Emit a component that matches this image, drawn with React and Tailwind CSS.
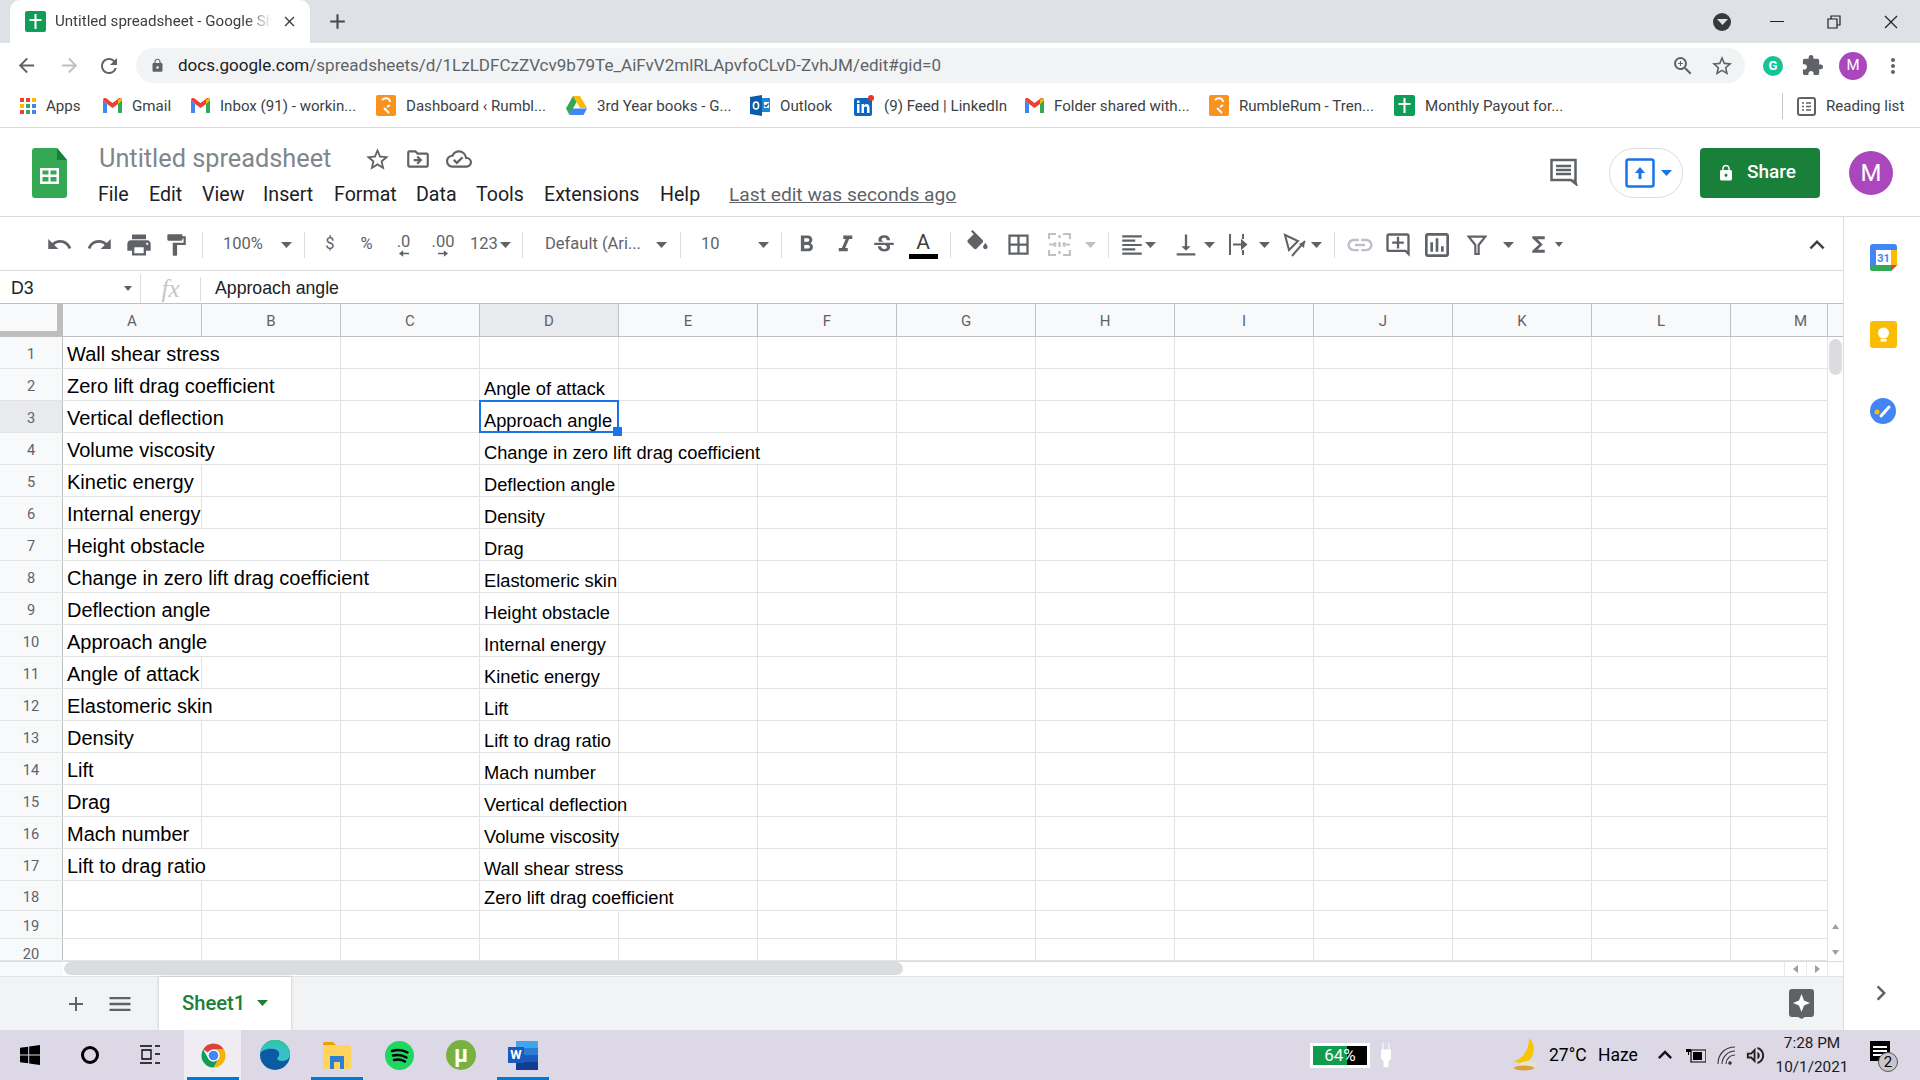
import {
  MdArrowBack, MdArrowForward, MdRefresh, MdLock, MdZoomIn, MdStarBorder, MdExtension, MdMoreVert, MdClose, MdAdd,
  MdUndo, MdRedo, MdPrint, MdFormatPaint, MdFormatBold, MdFormatItalic, MdStrikethroughS, MdBorderAll,
  MdFormatAlignLeft, MdVerticalAlignBottom, MdLink, MdOutlineAddComment, MdOutlineInsertChart, MdFunctions, MdExpandLess, MdMenu,
  MdOutlineDriveFileMove, MdOutlineCloudDone, MdChevronRight, MdKeyboardArrowUp, MdOutlineVolumeUp,
} from 'react-icons/md';

const sans = 'font-["Roboto",sans-serif]';
const arial = 'font-["Liberation_Sans",Arial,sans-serif]';

const COLS = ['A', 'B', 'C', 'D', 'E', 'F', 'G', 'H', 'I', 'J', 'K', 'L', 'M'];

// a / d = text in columns A and D, aSpan / dSpan = how many cell borders the text runs over
const ROWS = [
  { a: 'Wall shear stress', aSpan: 1 },
  { a: 'Zero lift drag coefficient', aSpan: 1, d: 'Angle of attack' },
  { a: 'Vertical deflection', aSpan: 1, d: 'Approach angle' },
  { a: 'Volume viscosity', aSpan: 1, d: 'Change in zero lift drag coefficient', dSpan: 2 },
  { a: 'Kinetic energy', d: 'Deflection angle' },
  { a: 'Internal energy', d: 'Density' },
  { a: 'Height obstacle', aSpan: 1, d: 'Drag' },
  { a: 'Change in zero lift drag coefficient', aSpan: 2, d: 'Elastomeric skin' },
  { a: 'Deflection angle', aSpan: 1, d: 'Height obstacle' },
  { a: 'Approach angle', aSpan: 1, d: 'Internal energy' },
  { a: 'Angle of attack', d: 'Kinetic energy' },
  { a: 'Elastomeric skin', aSpan: 1, d: 'Lift' },
  { a: 'Density', d: 'Lift to drag ratio' },
  { a: 'Lift', d: 'Mach number' },
  { a: 'Drag', d: 'Vertical deflection' },
  { a: 'Mach number', d: 'Volume viscosity' },
  { a: 'Lift to drag ratio', aSpan: 1, d: 'Wall shear stress' },
  { d: 'Zero lift drag coefficient', dSpan: 1 },
  {},
  {},
];

function Caret({ color = '#5f6368' }) {
  return (
    <svg width="11" height="6" viewBox="0 0 11 6" className="shrink-0">
      <path d="M0 0h11L5.5 6z" fill={color} />
    </svg>
  );
}

function SheetsFavicon({ size = 21 }) {
  return (
    <svg width={size} height={size} viewBox="0 0 21 21" className="shrink-0">
      <rect width="21" height="21" rx="2" fill="#0f9d58" />
      <path d="M9.5 3h2v5h5v2h-5v8h-2v-8h-5V8h5z" fill="#fff" />
    </svg>
  );
}

function GmailIcon() {
  return (
    <svg width="19" height="15" viewBox="0 0 19 15" className="shrink-0">
      <path d="M0 2v13h4V6z" fill="#4285f4" />
      <path d="M19 2v13h-4V6z" fill="#34a853" />
      <path d="M0 2c0-2 2-2.500 3.500-1.500L9.500 5l6-4.500C17-.5 19 0 19 2l-4 4-5.500 4L4 6z" fill="#ea4335" />
      <path d="M15 6l4-4c0-1-.5-1.500-1-2l-3 2z" fill="#fbbc04" />
    </svg>
  );
}

function RumbleIcon() {
  return (
    <svg width="20" height="21" viewBox="0 0 20 21" className="shrink-0">
      <rect width="20" height="21" rx="2" fill="#f7931e" />
      <path d="M6 5c3-3 8-2 8 2M14 10l-3 2M8 13l5 5" stroke="#fff" strokeWidth="2" fill="none" />
    </svg>
  );
}

function DriveIcon() {
  return (
    <svg width="21" height="19" viewBox="0 0 21 19" className="shrink-0">
      <path d="M7 0h7l7 12h-7z" fill="#fbbc04" />
      <path d="M7 0l3.500 6L3.500 19 0 12.500z" fill="#34a853" />
      <path d="M6.500 12.500H21L17.500 19h-14z" fill="#4285f4" />
    </svg>
  );
}

function OutlookIcon() {
  return (
    <svg width="20" height="21" viewBox="0 0 20 21" className="shrink-0">
      <path d="M8 3h12v14H8z" fill="#1e88d8" />
      <path d="M0 2l12-2v21L0 19z" fill="#0a5ca8" />
      <ellipse cx="6" cy="10.500" rx="2.600" ry="3.500" fill="none" stroke="#fff" strokeWidth="1.600" />
      <path d="M14 7h5v6h-5z" fill="#fff" />
      <path d="M14.500 10l1.500 1.500 2.500-3" stroke="#0a5ca8" strokeWidth="1.200" fill="none" />
    </svg>
  );
}

function LinkedinIcon() {
  return (
    <svg width="20" height="21" viewBox="0 0 20 21" className="shrink-0">
      <rect y="3" width="18" height="18" rx="2" fill="#0a66c2" />
      <circle cx="17" cy="3" r="3" fill="#e0392b" />
      <path d="M3 9h2.500v9H3zM3 5.500h2.500V8H3zM7.500 9H10v1.500c1.500-2.500 5.500-2 5.500 2V18H13v-5c0-2-3-2-3 0v5H7.500z" fill="#fff" />
    </svg>
  );
}

function AppsIcon() {
  const colors = ['#ea4335', '#ea4335', '#fbbc04', '#fbbc04', '#34a853', '#4285f4', '#ea4335', '#34a853', '#4285f4'];
  return (
    <div className="grid grid-cols-3 gap-[2px] w-[16px] h-[16px] shrink-0">
      {colors.map((c, i) => (
        <svg key={i} viewBox="0 0 4 4"><rect width="4" height="4" fill={c} /></svg>
      ))}
    </div>
  );
}

function Bookmark({ w, icon, label }) {
  return (
    <div className={`${w} flex items-center gap-[10px] shrink-0`}>
      {icon}
      <span className="text-[15.1px] text-[#3c4043] whitespace-nowrap">{label}</span>
    </div>
  );
}

function BrowserChrome() {
  return (
    <div className={`${sans} shrink-0`}>
      <div className="h-[43px] bg-[#dee1e6] flex items-end pl-[10px]">
        <div className="w-[300px] h-[43px] bg-white rounded-t-[10px] flex items-center pl-[15px]">
          <SheetsFavicon />
          <span className="ml-[9px] w-[217px] overflow-hidden whitespace-nowrap text-[15.1px] text-[#3c4043] [mask-image:linear-gradient(to_right,black_88%,transparent)]">Untitled spreadsheet - Google Sheets</span>
          <MdClose size={17} className="ml-[9px] text-[#3c4043]" />
        </div>
        <div className="h-[43px] flex items-center ml-[15px]">
          <MdAdd size={25} className="text-[#45494e]" />
        </div>
        <div className="ml-auto h-[43px] flex items-center">
          <div className="w-[18px] h-[18px] rounded-full bg-[#35393c] flex items-center justify-center">
            <Caret color="#dee1e6" />
          </div>
          <div className="ml-[39px] w-[14px] h-[1.5px] bg-[#202124]" />
          <svg width="14" height="14" viewBox="0 0 14 14" className="ml-[43px]">
            <path d="M1 4h9v9H1zM4 4V1h9v9h-3" fill="none" stroke="#202124" strokeWidth="1.200" />
          </svg>
          <svg width="14" height="14" viewBox="0 0 14 14" className="ml-[43px] mr-[22px]">
            <path d="M1 1l12 12M13 1L1 13" stroke="#202124" strokeWidth="1.200" />
          </svg>
        </div>
      </div>
      <div className="h-[40px] bg-white flex items-center pt-[5px]">
        <MdArrowBack size={23} className="ml-[15px] text-[#5f6368]" />
        <MdArrowForward size={23} className="ml-[20px] text-[#bdc1c6]" />
        <MdRefresh size={24} className="ml-[16px] text-[#5f6368]" />
        <div className="ml-[15px] w-[1609px] h-[35px] bg-[#f1f3f4] rounded-full flex items-center pl-[14px]">
          <MdLock size={15} className="text-[#5f6368]" />
          <span className="ml-[13px] text-[17.05px] text-[#5f6368] whitespace-nowrap">
            <span className="text-[#202124]">docs.google.com</span>/spreadsheets/d/1LzLDFCzZVcv9b79Te_AiFvV2mlRLApvfoCLvD-ZvhJM/edit#gid=0
          </span>
          <MdZoomIn size={24} className="ml-auto text-[#5f6368]" />
          <MdStarBorder size={24} className="ml-[15px] mr-[11px] text-[#5f6368]" />
        </div>
        <div className="ml-[18px] w-[20px] h-[20px] rounded-full bg-[#15c39a] text-white text-[13px] font-bold flex items-center justify-center">G</div>
        <MdExtension size={23} className="ml-[18px] text-[#5f6368]" />
        <div className="ml-[15px] w-[28px] h-[28px] rounded-full bg-[#ab47bc] text-white text-[15px] flex items-center justify-center">M</div>
        <MdMoreVert size={24} className="ml-[14px] text-[#5f6368]" />
      </div>
      <div className="h-[45px] bg-white border-b border-[#dadce0] flex items-center pl-[20px] pt-[2px]">
        <Bookmark w="w-[83px]" icon={<AppsIcon />} label="Apps" />
        <Bookmark w="w-[88px]" icon={<GmailIcon />} label="Gmail" />
        <Bookmark w="w-[185px]" icon={<GmailIcon />} label="Inbox (91) - workin..." />
        <Bookmark w="w-[190px]" icon={<RumbleIcon />} label="Dashboard ‹ Rumbl..." />
        <Bookmark w="w-[184px]" icon={<DriveIcon />} label="3rd Year books - G..." />
        <Bookmark w="w-[104px]" icon={<OutlookIcon />} label="Outlook" />
        <Bookmark w="w-[171px]" icon={<LinkedinIcon />} label="(9) Feed | LinkedIn" />
        <Bookmark w="w-[184px]" icon={<GmailIcon />} label="Folder shared with..." />
        <Bookmark w="w-[185px]" icon={<RumbleIcon />} label="RumbleRum - Tren..." />
        <Bookmark w="w-[200px]" icon={<SheetsFavicon />} label="Monthly Payout for..." />
        <div className="ml-[188px] h-[26px] border-l border-[#c4c7ca] pl-[14px] flex items-center gap-[10px]">
          <svg width="19" height="19" viewBox="0 0 19 19" className="shrink-0">
            <rect x="1" y="1" width="17" height="17" rx="2" fill="none" stroke="#5f6368" strokeWidth="2" />
            <path d="M5 6h2M9 6h5M5 9.500h2M9 9.500h5M5 13h2M9 13h5" stroke="#5f6368" strokeWidth="1.500" />
          </svg>
          <span className="text-[15.1px] text-[#3c4043] whitespace-nowrap">Reading list</span>
        </div>
      </div>
    </div>
  );
}

function SheetsLogo() {
  return (
    <svg width="35" height="50" viewBox="0 0 35 50" className="shrink-0">
      <path d="M3 0h22l10 12v35a3 3 0 0 1-3 3H3a3 3 0 0 1-3-3V3a3 3 0 0 1 3-3z" fill="#34a853" />
      <path d="M25 0l10 12H25z" fill="#188038" />
      <path d="M8 20h19v16H8z" fill="#fff" />
      <path d="M10.500 22.500h6v4h-6zM18.500 22.500h6v4h-6zM10.500 29h6v4.500h-6zM18.500 29h6v4.500h-6z" fill="#34a853" />
    </svg>
  );
}

function Menu({ w, label }) {
  return <div className={`${w} shrink-0 whitespace-nowrap`}>{label}</div>;
}

function SheetsHeader() {
  return (
    <div className={`${sans} h-[89px] bg-white border-b border-[#dadce0] flex items-start pl-[32px] pt-[20px] shrink-0`}>
      <SheetsLogo />
      <div className="ml-[32px] -mt-[10px]">
        <div className="flex items-center h-[42px]">
          <span className="w-[265px] text-[25.3px] text-[#80868b] whitespace-nowrap">Untitled spreadsheet</span>
          <MdStarBorder size={27} className="text-[#5f6368]" />
          <MdOutlineDriveFileMove size={26} className="ml-[14px] text-[#5f6368]" />
          <MdOutlineCloudDone size={26} className="ml-[15px] text-[#5f6368]" />
        </div>
        <div className="flex items-center h-[32px] -mt-[1px] -ml-[1px] text-[19.6px] text-[#202124]">
          <Menu w="w-[51px]" label="File" />
          <Menu w="w-[53px]" label="Edit" />
          <Menu w="w-[61px]" label="View" />
          <Menu w="w-[71px]" label="Insert" />
          <Menu w="w-[82px]" label="Format" />
          <Menu w="w-[60px]" label="Data" />
          <Menu w="w-[68px]" label="Tools" />
          <Menu w="w-[116px]" label="Extensions" />
          <Menu w="w-[69px]" label="Help" />
          <span className="text-[19.2px] text-[#5f6368] underline whitespace-nowrap">Last edit was seconds ago</span>
        </div>
      </div>
      <div className="ml-auto flex items-center h-[50px]">
        <svg width="29" height="29" viewBox="0 0 29 29" className="-mt-[4px]">
          <path d="M2.500 3h24v20h-.500l1 4-5-4h-19.500z" fill="none" stroke="#5f6368" strokeWidth="2.500" />
          <path d="M7 9h15M7 13h15M7 17h15" stroke="#5f6368" strokeWidth="2.500" />
        </svg>
        <div className="ml-[31px] w-[74px] h-[50px] rounded-full border border-[#dadce0] flex items-center pl-[15px] gap-[6px]">
          <svg width="30" height="30" viewBox="0 0 30 30">
            <rect x="1.500" y="1.500" width="27" height="27" rx="2" fill="none" stroke="#1a73e8" strokeWidth="2.500" />
            <path d="M15 9l-5 6h3.500v6h3v-6H20z" fill="#1a73e8" />
          </svg>
          <Caret color="#1a73e8" />
        </div>
        <div className="ml-[17px] w-[120px] h-[50px] rounded-[4px] bg-[#188038] text-white flex items-center pl-[17px] gap-[12px] pb-[1px]">
          <MdLock size={18} />
          <span className="text-[19px] font-medium">Share</span>
        </div>
        <div className="ml-[29px] mr-[27px] w-[44px] h-[44px] rounded-full bg-[#ab47bc] text-white text-[24px] flex items-center justify-center">M</div>
      </div>
    </div>
  );
}

function Slot({ w, children, className = 'justify-center' }) {
  return <div className={`${w} ${className} shrink-0 flex items-center h-full`}>{children}</div>;
}

function Divider({ w }) {
  return (
    <div className={`${w} shrink-0 flex justify-center items-center h-full`}>
      <div className="w-px h-[26px] bg-[#dadce0]" />
    </div>
  );
}

function DecimalIcon({ label, dir }) {
  return (
    <div className="flex flex-col items-center leading-none">
      <span className="text-[16.5px] leading-[17px]">{label}</span>
      <svg width="10" height="7" viewBox="0 0 12 8">
        <path d={dir === 'left' ? 'M12 3H5V0L0 4l5 4V5h7z' : 'M0 3h7V0l5 4-5 4V5H0z'} fill="#5f6368" />
      </svg>
    </div>
  );
}

function Toolbar() {
  return (
    <div className={`${sans} h-[54px] bg-white border-b border-[#dadce0] flex items-center pl-[40px] pt-[2px] text-[#5f6368] text-[16.5px] shrink-0`}>
      <Slot w="w-[39px]"><MdUndo size={27} /></Slot>
      <Slot w="w-[41px]"><MdRedo size={27} /></Slot>
      <Slot w="w-[37px]"><MdPrint size={28} /></Slot>
      <Slot w="w-[38px]"><MdFormatPaint size={26} /></Slot>
      <Divider w="w-[14px]" />
      <Slot w="w-[87px]" className="pl-[14px]"><span className="w-[58px]">100%</span><Caret /></Slot>
      <Divider w="w-[16px]" />
      <Slot w="w-[36px]">$</Slot>
      <Slot w="w-[37px]">%</Slot>
      <Slot w="w-[37px]"><DecimalIcon label=".0" dir="left" /></Slot>
      <Slot w="w-[42px]"><DecimalIcon label=".00" dir="right" /></Slot>
      <Slot w="w-[52px]" className="pl-[6px]"><span className="w-[30px]">123</span><Caret /></Slot>
      <Divider w="w-[12px]" />
      <Slot w="w-[146px]" className="pl-[17px]"><span className="w-[111px] whitespace-nowrap">Default (Ari...</span><Caret /></Slot>
      <Divider w="w-[12px]" />
      <Slot w="w-[89px]" className="pl-[15px]"><span className="w-[57px]">10</span><Caret /></Slot>
      <Divider w="w-[12px]" />
      <Slot w="w-[38px]"><MdFormatBold size={27} /></Slot>
      <Slot w="w-[40px]"><MdFormatItalic size={27} /></Slot>
      <Slot w="w-[38px]"><MdStrikethroughS size={26} /></Slot>
      <Slot w="w-[40px]">
        <div className="flex flex-col items-center">
          <span className="text-[21px] leading-[24px] text-[#3c4043]">A</span>
          <div className="w-[29px] h-[5px] bg-black" />
        </div>
      </Slot>
      <Divider w="w-[14px]" />
      <Slot w="w-[40px]">
        <svg width="27" height="27" viewBox="0 0 24 24" className="-mt-[3px]">
          <path d="M16.560 8.940L7.620 0 6.210 1.410l2.380 2.380-5.150 5.150c-.59.59-.59 1.540 0 2.120l5.500 5.500c.29.29.68.44 1.060.44s.77-.15 1.060-.44l5.500-5.500c.59-.58.59-1.530 0-2.120zM19 11.500s-2 2.170-2 3.500c0 1.100.9 2 2 2s2-.9 2-2c0-1.330-2-3.500-2-3.500z" fill="#5f6368" />
        </svg>
      </Slot>
      <Slot w="w-[42px]"><MdBorderAll size={27} /></Slot>
      <Slot w="w-[40px]">
        <svg width="23" height="23" viewBox="0 0 23 23" fill="none" stroke="#bdc1c6" strokeWidth="2.200">
          <path d="M1 6V1h7M15 1h7v5M22 17v5h-7M8 22H1v-5M1 11.500h5M22 11.500h-5M11.500 2v3M11.500 9v5M11.500 18v3" />
          <path d="M8 11.500l-2-2M8 11.500l-2 2M15 11.500l2-2M15 11.500l2 2" />
        </svg>
      </Slot>
      <Slot w="w-[22px]"><Caret color="#bdc1c6" /></Slot>
      <Divider w="w-[14px]" />
      <Slot w="w-[52px]" className="pl-[4px]"><MdFormatAlignLeft size={26} /><Caret /></Slot>
      <Slot w="w-[54px]" className="pl-[5px]"><MdVerticalAlignBottom size={28} className="mr-[4px]" /><Caret /></Slot>
      <Slot w="w-[54px]" className="pl-[6px]">
        <svg width="25" height="25" viewBox="0 0 25 25" className="mr-[7px]" fill="none" stroke="#5f6368" strokeWidth="2">
          <path d="M3 2v21M16 2v5M16 11v3M16 18v5M6 12.500h12" />
          <path d="M15 9l4 3.500-4 3.500z" fill="#5f6368" />
        </svg>
        <Caret />
      </Slot>
      <Slot w="w-[52px]" className="pl-[7px]">
        <svg width="26" height="26" viewBox="0 0 26 26" className="mr-[3px]" fill="none" stroke="#5f6368" strokeWidth="2">
          <path d="M3 3l13 6L7 18zM10 24L23 9" />
          <path d="M23 9l-1 7-5-4z" fill="#5f6368" stroke="none" />
        </svg>
        <Caret />
      </Slot>
      <Divider w="w-[14px]" />
      <Slot w="w-[38px]"><MdLink size={30} className="text-[#bdc1c6]" /></Slot>
      <Slot w="w-[38px]"><MdOutlineAddComment size={28} /></Slot>
      <Slot w="w-[40px]"><MdOutlineInsertChart size={32} /></Slot>
      <Slot w="w-[46px]" className="pl-[10px]">
        <svg width="20" height="20" viewBox="0 0 24 24" fill="none" stroke="#5f6368" strokeWidth="2.600">
          <path d="M2 2h20l-8 10v11h-4V12z" />
        </svg>
      </Slot>
      <Slot w="w-[18px]" className="justify-start"><Caret /></Slot>
      <Slot w="w-[42px]" className="justify-start pl-[5px]"><MdFunctions size={25} /></Slot>
      <Slot w="w-[20px]" className="justify-start -ml-[8px]"><svg width="8" height="5" viewBox="0 0 8 5"><path d="M0 0h8L4 5z" fill="#5f6368" /></svg></Slot>
      <Slot w="w-[258px]" className="justify-end"><MdExpandLess size={30} className="text-[#3c4043] mr-[1px]" /></Slot>
    </div>
  );
}

function FormulaBar() {
  return (
    <div className={`${arial} h-[33px] bg-white border-b border-[#c0c0c0] flex items-center pt-[3px] text-[17.7px] text-[#202124] shrink-0`}>
      <div className="w-[141px] h-full border-r border-[#dadce0] flex items-center pl-[11px] pr-[8px]">
        <span className="flex-1">D3</span>
        <svg width="8" height="5" viewBox="0 0 8 5"><path d="M0 0h8L4 5z" fill="#5f6368" /></svg>
      </div>
      <div className="w-[60px] h-[24px] border-r border-[#dadce0] flex items-center justify-center font-['Liberation_Serif',serif] italic text-[25px] text-[#c4c7c5]">fx</div>
      <span className="ml-[14px]">Approach angle</span>
    </div>
  );
}

function ColumnHeader() {
  return (
    <div className={`${sans} h-[33px] flex border-b border-[#c0c0c0] bg-[#f8f9fa] text-[#5f6368] text-[15px]`}>
      <div className="w-[63px] h-full shrink-0 border-r-[6px] border-b-[5px] border-[#bdbdbd]" />
      {COLS.map((c) => (
        <div
          key={c}
          className={`${c === 'M' ? 'w-[97px] justify-start pl-[63px]' : 'w-[139px] justify-center'} ${c === 'D' ? 'bg-[#e8eaed]' : ''} shrink-0 border-r border-[#c0c0c0] flex items-center pt-[3px]`}
        >
          {c}
        </div>
      ))}
    </div>
  );
}

function rowHeight(n) {
  if (n === 18) return 'h-[30px]';
  if (n === 19) return 'h-[28px]';
  if (n === 20) return 'h-[22px]';
  return 'h-[32px]';
}

function GridRow({ n, row }) {
  return (
    <div className={`${rowHeight(n)} flex border-b border-[#e2e3e3]`}>
      <div className={`${sans} ${n === 3 ? 'bg-[#e8eaed]' : 'bg-[#f8f9fa]'} ${n === 20 ? 'pt-[10px]' : 'pt-[4px]'} w-[63px] shrink-0 border-r border-[#c0c0c0] flex items-center justify-center text-[14.6px] text-[#5f6368]`}>
        {n}
      </div>
      {COLS.map((c, i) => {
        const hidden = (i === 0 && row.aSpan >= 1) || (i === 1 && row.aSpan >= 2) || (i === 3 && row.dSpan >= 1) || (i === 4 && row.dSpan >= 2);
        return (
          <div
            key={c}
            className={`${c === 'M' ? 'w-[97px]' : 'w-[139px]'} ${hidden ? 'border-transparent' : 'border-[#e2e3e3]'} shrink-0 border-r relative flex`}
          >
            {c === 'A' && row.a && (
              <span className="self-center pl-[4px] pt-[2px] whitespace-nowrap text-[20px] text-black">{row.a}</span>
            )}
            {c === 'D' && row.d && (
              <span className={`${n === 18 ? '-mb-[1px]' : '-mb-[2px]'} self-end pl-[4px] whitespace-nowrap text-[18.3px] text-black`}>{row.d}</span>
            )}
            {c === 'D' && n === 3 && (
              <div className="absolute -inset-[1px] border-2 border-[#1a73e8]">
                <div className="absolute -right-[5px] -bottom-[5px] w-[9px] h-[9px] bg-[#1a73e8]" />
              </div>
            )}
          </div>
        );
      })}
    </div>
  );
}

function Grid() {
  return (
    <div className={`${arial} flex-1 flex min-h-0`}>
      <div className="w-[1828px] shrink-0 overflow-hidden">
        <ColumnHeader />
        {ROWS.map((row, i) => (
          <GridRow key={i} n={i + 1} row={row} />
        ))}
      </div>
      <div className="w-[15px] shrink-0 flex flex-col">
        <div className="h-[33px] bg-[#f8f9fa] border-b border-[#c0c0c0] shrink-0" />
        <div className="w-[13px] h-[36px] mx-auto mt-[2px] rounded-full bg-[#dadce0]" />
        <div className="flex-1 flex flex-col justify-end items-center pb-[6px] gap-[21px]">
          <svg width="7" height="5" viewBox="0 0 7 5"><path d="M0 5h7L3.500 0z" fill="#9aa0a6" /></svg>
          <svg width="7" height="5" viewBox="0 0 7 5"><path d="M0 0h7L3.500 5z" fill="#9aa0a6" /></svg>
        </div>
      </div>
    </div>
  );
}

function HorizontalScroll() {
  return (
    <div className="h-[15px] shrink-0 flex border-t border-[#dadce0] bg-white">
      <div className="w-[63px] bg-[#f8f9fa]" />
      <div className="w-[839px] h-[13px] ml-[1px] rounded-full bg-[#dadce0]" />
      <div className="ml-auto flex items-center">
        <div className="w-[22px] h-full flex items-center justify-center border-l border-[#e8eaed]">
          <svg width="5" height="8" viewBox="0 0 5 8"><path d="M5 0v8L0 4z" fill="#9aa0a6" /></svg>
        </div>
        <div className="w-[22px] h-full flex items-center justify-center border-x border-[#e8eaed]">
          <svg width="5" height="8" viewBox="0 0 5 8"><path d="M0 0v8l5-4z" fill="#9aa0a6" /></svg>
        </div>
        <div className="w-[15px] h-full" />
      </div>
    </div>
  );
}

function SheetTabs() {
  return (
    <div className={`${sans} h-[54px] shrink-0 bg-[#f1f3f4] border-t border-[#e2e3e3] flex items-center`}>
      <MdAdd size={24} className="ml-[64px] text-[#5f6368]" />
      <MdMenu size={28} className="ml-[18px] text-[#5f6368]" />
      <div className="ml-[25px] w-[132px] h-full bg-white shadow-[0_0_3px_rgba(60,64,67,0.3)] flex items-center pl-[23px] gap-[12px] pb-[1px]">
        <span className="text-[20.2px] font-medium text-[#188038]">Sheet1</span>
        <Caret color="#188038" />
      </div>
      <svg width="25" height="30" viewBox="0 0 25 30" className="ml-auto mr-[29px]">
        <path d="M3 0h19a3 3 0 0 1 3 3v22a3 3 0 0 1-3 3h-6l-3.500 2-3.500-2H3a3 3 0 0 1-3-3V3a3 3 0 0 1 3-3z" fill="#5f6368" />
        <path d="M12.500 5l2.500 6.500L21 14l-6 2.500L12.500 23 10 16.500 4 14l6-2.500z" fill="#fff" />
      </svg>
    </div>
  );
}

function SidePanel() {
  return (
    <div className="w-[77px] shrink-0 border-l border-[#dadce0] bg-white flex flex-col items-center pt-[27px]">
      <svg width="27" height="27" viewBox="0 0 27 27" className="ml-[2px]">
        <path d="M3 0h21a3 3 0 0 1 3 3v18l-6 6H3a3 3 0 0 1-3-3V3a3 3 0 0 1 3-3z" fill="#4285f4" />
        <path d="M0 21h21v6H3a3 3 0 0 1-3-3z" fill="#34a853" />
        <path d="M21 6h6v15h-6z" fill="#fbbc04" />
        <path d="M21 21h6l-6 6z" fill="#ea4335" />
        <rect x="6" y="6" width="15" height="15" fill="#fff" />
        <text x="13.500" y="18" textAnchor="middle" fontSize="11" fontFamily="Roboto,sans-serif" fontWeight="700" fill="#4285f4">31</text>
      </svg>
      <svg width="27" height="27" viewBox="0 0 27 27" className="mt-[50px] ml-[2px]">
        <rect width="27" height="27" rx="3" fill="#fbbc04" />
        <circle cx="13.500" cy="12" r="5.500" fill="#fff" />
        <rect x="10.500" y="18" width="6" height="2.500" fill="#fff" />
      </svg>
      <svg width="26" height="26" viewBox="0 0 26 26" className="mt-[50px] ml-[2px]">
        <circle cx="13" cy="13" r="13" fill="#4285f4" />
        <circle cx="7" cy="14" r="2.500" fill="#fbbc04" />
        <path d="M11 18l8-9" stroke="#fff" strokeWidth="3" strokeLinecap="round" />
      </svg>
      <MdChevronRight size={30} className="mt-auto mb-[22px] -ml-[3px] text-[#5f6368]" />
    </div>
  );
}

function TaskItem({ children, active, current }) {
  return (
    <div className="w-[62px] h-full shrink-0 flex items-center justify-center relative">
      {current && <div className="absolute inset-y-0 left-[2px] right-[3px] bg-[#efedf3]" />}
      <div className="relative">{children}</div>
      {active && <div className="absolute bottom-0 left-[5px] right-[5px] h-[3px] bg-[#0078d4]" />}
    </div>
  );
}

function Taskbar() {
  return (
    <div className={`${sans} h-[50px] shrink-0 bg-[#ddd8e5] flex items-center text-black`}>
      <div className="w-[60px] flex justify-center">
        <svg width="20" height="20" viewBox="0 0 20 20">
          <path d="M0 2.800l8.200-1.100v7.900H0zM9.200 1.500L20 0v9.600H9.200zM0 10.400h8.200v7.900L0 17.200zM9.200 10.400H20V20L9.200 18.500z" fill="#000" />
        </svg>
      </div>
      <div className="w-[60px] flex justify-center">
        <div className="w-[18px] h-[18px] rounded-full border-[3px] border-black" />
      </div>
      <div className="w-[60px] flex justify-center">
        <svg width="20" height="20" viewBox="0 0 20 20" fill="none" stroke="#000" strokeWidth="1.300">
          <path d="M0 1h12M2 5h9v9H2zM0 18h12M15 1h5M15 18h5M15 9h5" />
        </svg>
      </div>
      <div className="w-[2px]" />
      <div className="h-full flex">
        <TaskItem current active>
          <svg width="29" height="29" viewBox="0 0 48 48">
            <path d="M24 4A20 20 0 0 1 41.320 14H24a10 10 0 0 0-8.660 5L6.680 14A20 20 0 0 1 24 4z" fill="#db4437" />
            <path d="M41.320 14A20 20 0 0 1 24 44l8.660-15A10 10 0 0 0 24 14z" fill="#f4b400" />
            <path d="M6.680 14A20 20 0 0 0 24 44l8.660-15a10 10 0 0 1-17.320 0z" fill="#0f9d58" />
            <circle cx="24" cy="24" r="10" fill="#fff" />
            <circle cx="24" cy="24" r="8" fill="#4285f4" />
          </svg>
        </TaskItem>
        <TaskItem>
          <svg width="30" height="30" viewBox="0 0 30 30">
            <circle cx="15" cy="15" r="15" fill="#0c59a4" />
            <path d="M0 15C0 5 8 0 15 0c9 0 15 7 15 14 0 5-4 7-8 7-3 0-5-1-5-3 3-1 4-8-3-9C7 8 1 10 0 15z" fill="#35c1c6" />
            <path d="M1 11C3 4 9 0 15 0c9 0 15 7 15 14-3-7-9-9-14-9C9 5 4 7 1 11z" fill="#2fc6a6" />
          </svg>
        </TaskItem>
        <TaskItem active>
          <svg width="28" height="27" viewBox="0 0 28 27">
            <path d="M0 2a2 2 0 0 1 2-2h8l3 3H0z" fill="#e8a100" />
            <rect y="3" width="28" height="24" rx="2" fill="#ffd35c" />
            <path d="M7 27V14h14v13h-4v-7h-6v7z" fill="#2f7fd1" />
          </svg>
        </TaskItem>
        <TaskItem>
          <svg width="29" height="29" viewBox="0 0 29 29">
            <circle cx="14.500" cy="14.500" r="14.500" fill="#1ed760" />
            <path d="M7 10c5-1.500 11-1 15.500 1.500M8 14.500c4.500-1 9.500-.5 13.500 2M9 19c3.500-.8 8-.4 11 1.500" stroke="#000" strokeWidth="2.400" strokeLinecap="round" fill="none" />
          </svg>
        </TaskItem>
        <TaskItem>
          <div className="w-[30px] h-[30px] rounded-full bg-[#78b13f] text-white font-bold text-[23px] leading-[30px] text-center">µ</div>
        </TaskItem>
        <TaskItem active>
          <svg width="30" height="29" viewBox="0 0 30 29">
            <path d="M8 0h22v8H8z" fill="#41a5ee" />
            <path d="M8 7h22v8H8z" fill="#2b7cd3" />
            <path d="M8 14h22v8H8z" fill="#185abd" />
            <path d="M8 21h22v8H8z" fill="#103f91" />
            <rect y="6" width="16" height="16" fill="#185abd" />
            <text x="8" y="18" textAnchor="middle" fontSize="13" fontWeight="700" fill="#fff" fontFamily="Roboto,sans-serif">W</text>
          </svg>
        </TaskItem>
      </div>

      <div className="ml-[756px] w-[60px] h-[25px] border-[3px] border-white bg-black relative shrink-0 flex">
        <div className="w-[34px] bg-[#129a4f]" />
        <span className="absolute inset-0 flex items-center justify-center text-[17px] text-white leading-none">64%</span>
      </div>
      <svg width="10" height="24" viewBox="0 0 10 24" className="ml-[11px]">
        <path d="M2 0v7M8 0v7M0 7h10v7a5 5 0 0 1-3 4v6H3v-6a5 5 0 0 1-3-4z" fill="#fff" stroke="#fff" strokeWidth="1" />
      </svg>
      <svg width="30" height="36" viewBox="0 0 30 36" className="ml-[121px]">
        <path d="M17 1c6 5 7 17-1 23-5 3-11 2-14 0 6-1 15-8 15-23z" fill="#f7c600" />
        <ellipse cx="17" cy="27" rx="9" ry="3" fill="#e9e2d0" />
        <ellipse cx="12" cy="31" rx="10" ry="2.500" fill="#d8a33f" />
      </svg>
      <span className="ml-[7px] w-[38px] text-[17.5px] whitespace-nowrap">27°C</span>
      <span className="ml-[11px] w-[40px] text-[17.5px] whitespace-nowrap">Haze</span>
      <MdKeyboardArrowUp size={28} className="ml-[13px] text-[#111]" />
      <svg width="20" height="20" viewBox="0 0 20 20" className="ml-[7px]">
        <path d="M1 0v4M4 0v4M0 4h5v3H3v3H2V7H0z" fill="#000" />
        <path d="M5 5h15v12H5z" fill="none" stroke="#000" strokeWidth="1.200" />
        <path d="M7 7h9v8H7z" fill="#000" />
      </svg>
      <svg width="20" height="20" viewBox="0 0 20 20" className="ml-[10px]" fill="none" stroke="#333" strokeWidth="1.100">
        <path d="M2 19C2 9 9 2 19 2M6 19c0-7 6-13 13-13M10 19c0-5 4-9 9-9" />
        <circle cx="14" cy="18" r="1.200" fill="#333" />
      </svg>
      <MdOutlineVolumeUp size={23} className="ml-[8px] text-[#222]" />
      <div className="ml-[11px] w-[68px] flex flex-col items-center text-[15.3px] leading-[24px] text-[#1b1b1b] whitespace-nowrap">
        <span>7:28 PM</span>
        <span>10/1/2021</span>
      </div>
      <div className="ml-[24px] relative w-[28px] h-[34px]">
        <div className="w-[20px] h-[20px] bg-black flex flex-col justify-center gap-[2px] px-[3px] mt-[3px]">
          <div className="h-[2px] bg-white" />
          <div className="h-[2px] bg-white" />
          <div className="h-[2px] bg-white" />
        </div>
        <div className="absolute right-0 bottom-0 w-[20px] h-[20px] rounded-full bg-[#c9c5cf] border border-[#555] text-[15px] leading-[18px] text-center">2</div>
      </div>
    </div>
  );
}

export default function App() {
  return (
    <div className="w-[1920px] h-[1080px] flex flex-col overflow-hidden bg-white">
      <BrowserChrome />
      <SheetsHeader />
      <div className="flex-1 flex min-h-0">
        <div className="w-[1843px] shrink-0 flex flex-col min-h-0">
          <Toolbar />
          <FormulaBar />
          <Grid />
          <HorizontalScroll />
          <SheetTabs />
        </div>
        <SidePanel />
      </div>
      <Taskbar />
    </div>
  );
}
